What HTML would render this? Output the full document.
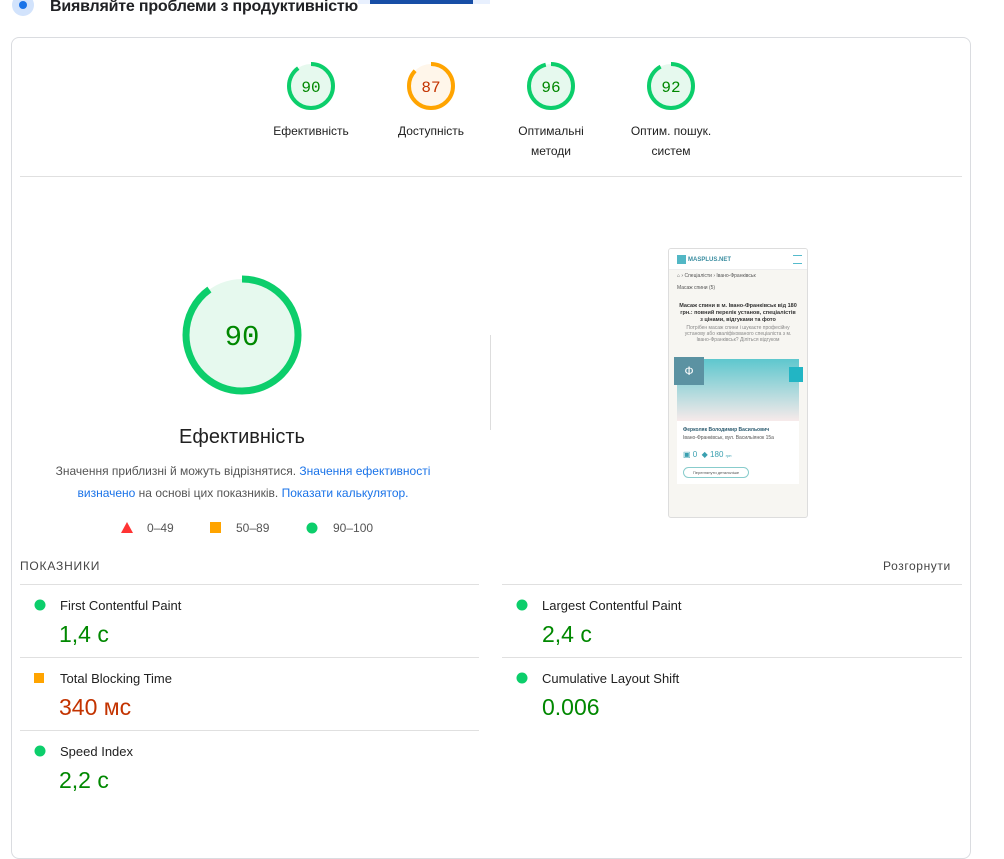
<!DOCTYPE html><html><head><meta charset="utf-8"><style>
body{margin:0;width:1004px;height:809px;overflow:hidden;background:#fff;font-family:"Liberation Sans",Arial,sans-serif;position:relative;color:#212121}
.a{position:absolute}
.lbl{font-size:12px;color:#212121;text-align:center;width:120px;line-height:20px}
.met{font-size:13px;color:#212121}
.val{font-size:23px}
.g{color:#008800}.o{color:#c33300}
.hr{position:absolute;height:1px;background:#e0e0e0}
</style></head><body>
<div class="a" style="left:12px;top:-6px;width:22px;height:22px;border-radius:50%;background:#d2e3fc"></div>
<div class="a" style="left:19px;top:1px;width:8px;height:8px;border-radius:50%;background:#1a73e8"></div>
<div class="a" style="left:50px;top:-2px;font-size:16px;color:#202124;font-weight:bold;letter-spacing:-0.2px">Виявляйте проблеми з продуктивністю</div>
<div class="a" style="left:358px;top:0;width:132px;height:4px;background:#e8f0fe"></div>
<div class="a" style="left:370px;top:0;width:103px;height:4px;background:#174ea6"></div>
<div class="a" style="left:11px;top:37px;width:958px;height:820px;border:1px solid #dadce0;border-radius:8px"></div>

<svg class="a" style="left:0;top:0" width="1004" height="809">
<g fill="none" stroke-width="4">
<circle cx="311" cy="86" r="22" fill="#e6f9ee" stroke="none"/>
<circle cx="311" cy="86" r="22" stroke="#0cce6b" stroke-dasharray="124.4 200" transform="rotate(-90 311 86)"/>
<circle cx="431" cy="86" r="22" fill="#fff6ea" stroke="none"/>
<circle cx="431" cy="86" r="22" stroke="#ffa400" stroke-dasharray="120.3 200" transform="rotate(-90 431 86)"/>
<circle cx="551" cy="86" r="22" fill="#e6f9ee" stroke="none"/>
<circle cx="551" cy="86" r="22" stroke="#0cce6b" stroke-dasharray="132.7 200" transform="rotate(-90 551 86)"/>
<circle cx="671" cy="86" r="22" fill="#e6f9ee" stroke="none"/>
<circle cx="671" cy="86" r="22" stroke="#0cce6b" stroke-dasharray="127.2 200" transform="rotate(-90 671 86)"/>
<circle cx="242" cy="335" r="56" fill="#e6f9ee" stroke="none"/>
<circle cx="242" cy="335" r="56" stroke="#0cce6b" stroke-width="7" stroke-dasharray="316.7 400" transform="rotate(-90 242 335)"/>
</g>
<text x="311" y="92" text-anchor="middle" font-family="Liberation Mono" font-size="16" fill="#008800">90</text>
<text x="431" y="92" text-anchor="middle" font-family="Liberation Mono" font-size="16" fill="#c33300">87</text>
<text x="551" y="92" text-anchor="middle" font-family="Liberation Mono" font-size="16" fill="#008800">96</text>
<text x="671" y="92" text-anchor="middle" font-family="Liberation Mono" font-size="16" fill="#008800">92</text>
<text x="242" y="345" text-anchor="middle" font-family="Liberation Mono" font-size="29" fill="#008800">90</text>
<polygon points="127,522 133,533 121,533" fill="#ff3333"/>
<rect x="210" y="522" width="11" height="11" fill="#ffa400"/>
<circle cx="312" cy="528" r="5.5" fill="#0cce6b"/>
<circle cx="40" cy="605" r="5.5" fill="#0cce6b"/>
<rect x="34" y="673" width="10" height="10" fill="#ffa400"/>
<circle cx="40" cy="751" r="5.5" fill="#0cce6b"/>
<circle cx="522" cy="605" r="5.5" fill="#0cce6b"/>
<circle cx="522" cy="678" r="5.5" fill="#0cce6b"/>
</svg>
<div class="a lbl" style="left:251px;top:121px">Ефективність</div>
<div class="a lbl" style="left:371px;top:121px">Доступність</div>
<div class="a lbl" style="left:491px;top:121px">Оптимальні<br>методи</div>
<div class="a lbl" style="left:611px;top:121px">Оптим. пошук.<br>систем</div>
<div class="hr" style="left:20px;top:176px;width:942px"></div>

<div class="a" style="left:92px;top:426px;width:300px;text-align:center;font-size:20px;color:#212121">Ефективність</div>
<div class="a" style="left:50px;top:460px;width:386px;text-align:center;font-size:12px;line-height:22px;color:#555">Значення приблизні й можуть відрізнятися. <span style="color:#1a73e8">Значення ефективності визначено</span> на основі цих показників. <span style="color:#1a73e8">Показати калькулятор.</span></div>
<div class="a" style="left:147px;top:521px;font-size:12px;color:#555">0–49</div>
<div class="a" style="left:236px;top:521px;font-size:12px;color:#555">50–89</div>
<div class="a" style="left:333px;top:521px;font-size:12px;color:#555">90–100</div>
<div class="a" style="left:490px;top:335px;width:1px;height:95px;background:#ddd"></div>

<div class="a" style="left:668px;top:248px;width:138px;height:268px;border:1px solid #ddd;border-radius:3px;background:#f7f6f2;overflow:hidden;font-size:5px;color:#555">
<div style="background:#fff;height:20px;border-bottom:1px solid #eee"><span style="position:absolute;left:8px;top:6px;width:9px;height:9px;background:#52b7c5"></span><span style="position:absolute;left:19px;top:8px;font-size:6px;color:#3a8da0;font-weight:bold">MASPLUS.NET</span><span style="position:absolute;right:5px;top:6px;width:9px;height:7px;border-top:1px solid #5bc;border-bottom:1px solid #5bc"></span></div>
<div style="position:absolute;left:8px;top:24px">⌂ › Спеціалісти › Івано-Франківськ</div>
<div style="position:absolute;left:8px;top:36px">Масаж спини (5)</div>
<div style="position:absolute;left:10px;top:54px;width:118px;text-align:center;font-weight:bold;color:#333;font-size:5.5px;line-height:7px">Масаж спини в м. Івано-Франківськ від 180 грн.: повний перелік установ, спеціалістів з цінами, відгуками та фото</div>
<div style="position:absolute;left:10px;top:76px;width:118px;text-align:center;color:#888;line-height:6px">Потрібен масаж спини і шукаєте професійну установу або кваліфікованого спеціаліста з м. Івано-Франківськ? Діліться відгуком</div>
<div style="position:absolute;left:8px;top:110px;width:122px;height:125px;background:#fff"></div>
<div style="position:absolute;left:8px;top:110px;width:122px;height:62px;background:linear-gradient(#5ec7ce,#f7eaea)"></div>
<div style="position:absolute;left:5px;top:108px;width:30px;height:28px;background:#5b92a2;color:#fff;font-size:12px;text-align:center;line-height:28px">Ф</div>
<div style="position:absolute;left:120px;top:118px;width:14px;height:15px;background:#22b5c4"></div>
<div style="position:absolute;left:14px;top:178px;font-weight:bold;color:#2d5c70">Ферколяк Володимир Васильович</div>
<div style="position:absolute;left:14px;top:186px;line-height:6px">Івано-Франківськ, вул. Васильіянок 15а</div>
<div style="position:absolute;left:14px;top:201px;font-size:8px;color:#3aa0b0">▣ 0 &nbsp;◆ 180 <span style="font-size:4px">грн</span></div>
<div style="position:absolute;left:14px;top:218px;width:64px;height:9px;border:1px solid #8cc;border-radius:6px;text-align:center;line-height:9px;font-size:4px">Переглянути детальніше</div>
</div>

<div class="a" style="left:20px;top:559px;font-size:12px;letter-spacing:0.8px;color:#444">ПОКАЗНИКИ</div>
<div class="a" style="left:883px;top:559px;font-size:12px;color:#444;letter-spacing:0.6px">Розгорнути</div>
<div class="hr" style="left:20px;top:584px;width:459px"></div>
<div class="hr" style="left:502px;top:584px;width:460px"></div>
<div class="a met" style="left:60px;top:598px">First Contentful Paint</div>
<div class="a val g" style="left:59px;top:621px">1,4 с</div>
<div class="a met" style="left:542px;top:598px">Largest Contentful Paint</div>
<div class="a val g" style="left:542px;top:621px">2,4 с</div>
<div class="hr" style="left:20px;top:657px;width:459px"></div>
<div class="hr" style="left:502px;top:657px;width:460px"></div>
<div class="a met" style="left:60px;top:671px">Total Blocking Time</div>
<div class="a val o" style="left:59px;top:694px">340 мс</div>
<div class="a met" style="left:542px;top:671px">Cumulative Layout Shift</div>
<div class="a val g" style="left:542px;top:694px">0.006</div>
<div class="hr" style="left:20px;top:730px;width:459px"></div>
<div class="a met" style="left:60px;top:744px">Speed Index</div>
<div class="a val g" style="left:59px;top:767px">2,2 с</div>
</body></html>
